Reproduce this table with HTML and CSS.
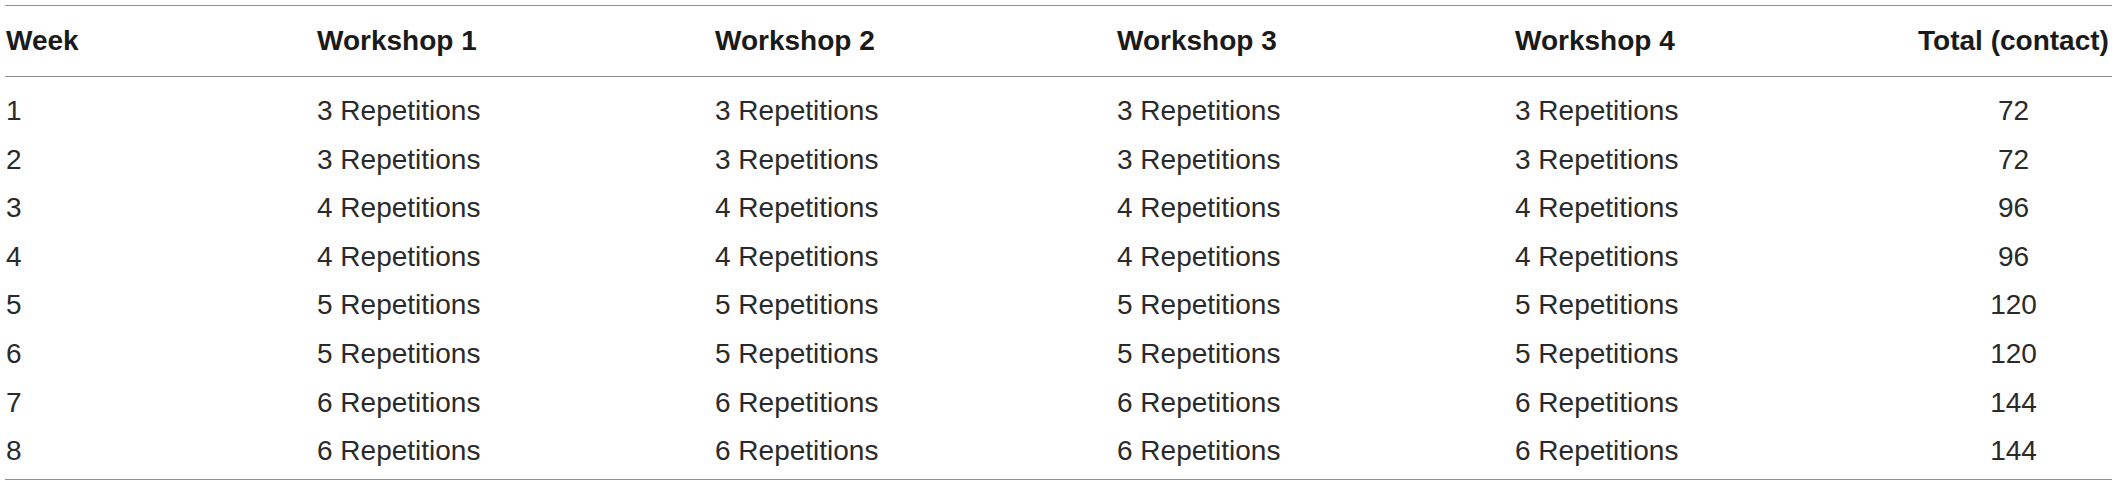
FILE: index.html
```html
<!DOCTYPE html>
<html lang="en">
<head>
<meta charset="utf-8">
<title>Workshop repetitions</title>
<link rel="stylesheet" href="styles.css">
</head>
<body>
<table class="data">
  <colgroup>
    <col class="c-week">
    <col class="c-w1">
    <col class="c-w2">
    <col class="c-w3">
    <col class="c-w4">
    <col class="c-total">
  </colgroup>
  <thead>
    <tr>
      <th>Week</th>
      <th>Workshop 1</th>
      <th>Workshop 2</th>
      <th>Workshop 3</th>
      <th>Workshop 4</th>
      <th class="total">Total (contact)</th>
    </tr>
  </thead>
  <tbody>
    <tr class="first"><td>1</td><td>3 Repetitions</td><td>3 Repetitions</td><td>3 Repetitions</td><td>3 Repetitions</td><td class="total">72</td></tr>
    <tr><td>2</td><td>3 Repetitions</td><td>3 Repetitions</td><td>3 Repetitions</td><td>3 Repetitions</td><td class="total">72</td></tr>
    <tr><td>3</td><td>4 Repetitions</td><td>4 Repetitions</td><td>4 Repetitions</td><td>4 Repetitions</td><td class="total">96</td></tr>
    <tr><td>4</td><td>4 Repetitions</td><td>4 Repetitions</td><td>4 Repetitions</td><td>4 Repetitions</td><td class="total">96</td></tr>
    <tr><td>5</td><td>5 Repetitions</td><td>5 Repetitions</td><td>5 Repetitions</td><td>5 Repetitions</td><td class="total">120</td></tr>
    <tr><td>6</td><td>5 Repetitions</td><td>5 Repetitions</td><td>5 Repetitions</td><td>5 Repetitions</td><td class="total">120</td></tr>
    <tr><td>7</td><td>6 Repetitions</td><td>6 Repetitions</td><td>6 Repetitions</td><td>6 Repetitions</td><td class="total">144</td></tr>
    <tr class="last"><td>8</td><td>6 Repetitions</td><td>6 Repetitions</td><td>6 Repetitions</td><td>6 Repetitions</td><td class="total">144</td></tr>
  </tbody>
</table>
</body>
</html>
```

FILE: styles.css
```css
html, body {
  margin: 0;
  padding: 0;
  background: #ffffff;
}

body {
  padding: 5px 0 0 5px;
  font-family: "Liberation Sans", Arial, sans-serif;
  color: #2a2a2a;
}

.data {
  border-collapse: collapse;
  table-layout: fixed;
  width: 2107px;
  font-size: 28px;
}

.c-week { width: 311px; }
.c-w1 { width: 398px; }
.c-w2 { width: 402px; }
.c-w3 { width: 398px; }
.c-w4 { width: 401px; }
.c-total { width: 197px; }

.data thead tr {
  border-top: 1px solid #8f8f8f;
  border-bottom: 1px solid #8f8f8f;
}

.data th {
  height: 70px;
  padding: 0 0 0 1px;
  text-align: left;
  font-weight: bold;
  vertical-align: middle;
  white-space: nowrap;
  color: #1a1a1a;
}

.data td {
  padding: 0 0 0 1px;
  line-height: 48.6px;
  text-align: left;
  white-space: nowrap;
  vertical-align: top;
}

.data .total {
  text-align: center;
  padding-left: 0;
}

.data tbody tr.first td {
  padding-top: 10px;
}

.data tbody tr.last td {
  padding-bottom: 3px;
}

.data tbody tr.last {
  border-bottom: 1px solid #8f8f8f;
}
```
